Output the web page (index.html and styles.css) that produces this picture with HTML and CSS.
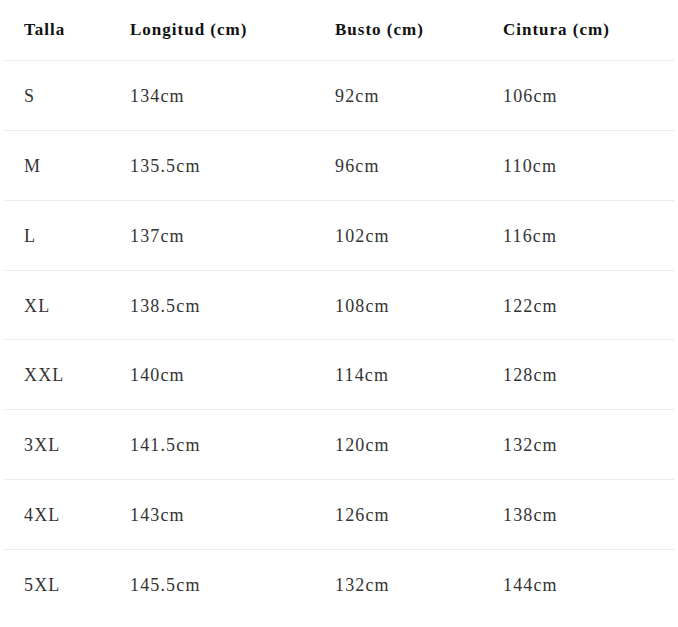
FILE: index.html
```html
<!DOCTYPE html>
<html lang="es">
<head>
<meta charset="utf-8">
<link rel="stylesheet" href="styles.css">
</head>
<body>
<div class="table">
  <div class="row head">
    <div class="cell">Talla</div>
    <div class="cell">Longitud (cm)</div>
    <div class="cell">Busto (cm)</div>
    <div class="cell">Cintura (cm)</div>
  </div>
  <div class="row"><div class="cell">S</div><div class="cell">134cm</div><div class="cell">92cm</div><div class="cell">106cm</div></div>
  <div class="row"><div class="cell">M</div><div class="cell">135.5cm</div><div class="cell">96cm</div><div class="cell">110cm</div></div>
  <div class="row"><div class="cell">L</div><div class="cell">137cm</div><div class="cell">102cm</div><div class="cell">116cm</div></div>
  <div class="row"><div class="cell">XL</div><div class="cell">138.5cm</div><div class="cell">108cm</div><div class="cell">122cm</div></div>
  <div class="row"><div class="cell">XXL</div><div class="cell">140cm</div><div class="cell">114cm</div><div class="cell">128cm</div></div>
  <div class="row"><div class="cell">3XL</div><div class="cell">141.5cm</div><div class="cell">120cm</div><div class="cell">132cm</div></div>
  <div class="row"><div class="cell">4XL</div><div class="cell">143cm</div><div class="cell">126cm</div><div class="cell">138cm</div></div>
  <div class="row last"><div class="cell">5XL</div><div class="cell">145.5cm</div><div class="cell">132cm</div><div class="cell">144cm</div></div>
</div>
</body>
</html>
```
FILE: styles.css
```css
html, body {
  margin: 0;
  padding: 0;
  background: #ffffff;
}
body {
  font-family: "Liberation Serif", "Times New Roman", serif;
  color: #333333;
}
.table {
  margin: 0 4px;
  width: 670px;
}
.row {
  display: grid;
  grid-template-columns: 106px 205px 168px 191px;
  align-items: center;
  height: 69.86px;
  box-sizing: border-box;
  border-bottom: 1px solid #ebebeb;
  font-size: 18px;
  letter-spacing: 1.15px;
}
.row .cell {
  padding-top: 2px;
}
.row.head {
  height: 61px;
  color: #111111;
  font-weight: bold;
  font-size: 17px;
  letter-spacing: 1px;
}
.row.head .cell {
  padding-top: 0;
}
.row.last {
  border-bottom: none;
}
.cell {
  padding-left: 20px;
  white-space: nowrap;
}
```
